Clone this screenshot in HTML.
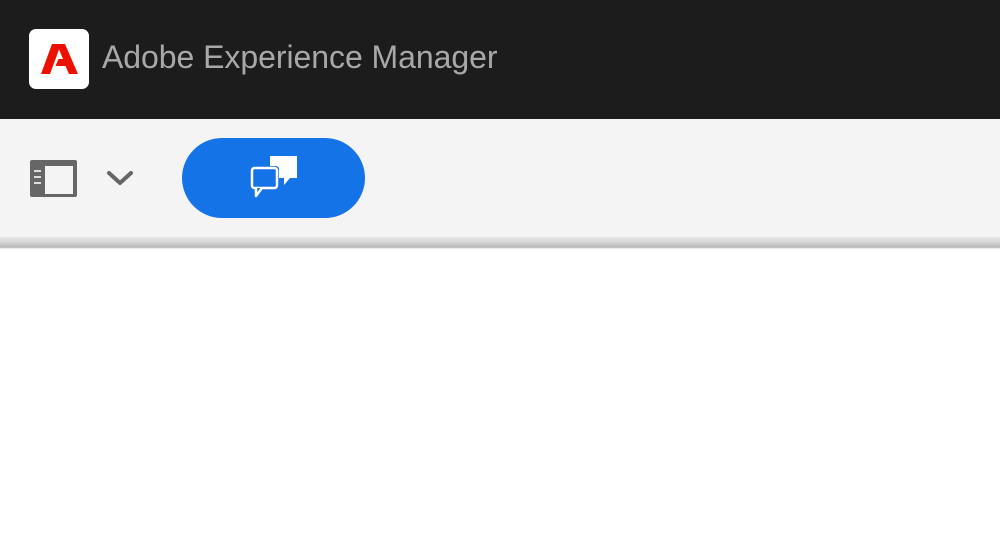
<!DOCTYPE html>
<html><head><style>
body{margin:0;width:1000px;height:555px;background:#fff;overflow:hidden;font-family:"Liberation Sans",sans-serif;position:relative}
.hdr{position:absolute;left:0;top:0;width:1000px;height:119px;background:#1c1c1c}
.logo{position:absolute;left:29px;top:29px;width:60px;height:60px;background:#fff;border-radius:7px}
.title{position:absolute;left:102px;top:39px;font-size:32px;color:#a8a8a8;letter-spacing:-0.05px}
.tb{position:absolute;left:0;top:119px;width:1000px;height:119px;background:#f4f4f4}
.line{position:absolute;left:0;top:237px;width:1000px;height:12px;background:linear-gradient(#e6e6e6,#d8d8d8 40%,#b8b8b8 85%,#fff)}
.btn{position:absolute;left:182px;top:138px;width:183px;height:80px;background:#1473e6;border-radius:40px}
</style></head><body>
<div class="hdr">
<div class="logo"><svg width="60" height="60" viewBox="0 0 60 60"><path d="M23 15h13l13 30h-9l-3.5-8h-10l3-7h4.5l-4-9.5L21 45h-9z" fill="#eb1000"/></svg></div>
<div class="title">Adobe Experience Manager</div>
</div>
<div class="tb">
<svg style="position:absolute;left:30px;top:41px" width="47" height="37" viewBox="0 0 47 37"><rect x="0" y="0" width="47" height="37" rx="2" fill="#666"/><rect x="15" y="6" width="28" height="28" fill="#f4f4f4"/><rect x="4" y="10" width="7" height="2" fill="#ddd"/><rect x="4" y="16" width="7" height="2" fill="#ddd"/><rect x="4" y="22" width="7" height="2" fill="#ddd"/></svg>
<svg style="position:absolute;left:106px;top:51px" width="28" height="17" viewBox="0 0 28 17"><path d="M3 3l11 10L25 3" stroke="#666" stroke-width="4" fill="none" stroke-linecap="round" stroke-linejoin="round"/></svg>
</div>
<div class="line"></div>
<div class="btn"><svg style="position:absolute;left:0;top:0" width="183" height="80" viewBox="0 0 183 80"><path d="M88 18h27v22h-7l-6 7v-7h-14z" fill="#fff"/><rect x="68" y="28" width="29" height="24" rx="3" fill="#1473e6"/><rect x="70" y="30" width="25" height="20" rx="2.5" fill="none" stroke="#fff" stroke-width="2.5"/><path d="M74 50v8l6-8" fill="#1473e6" stroke="#fff" stroke-width="2.5" stroke-linejoin="round"/></svg></div>
</body></html>
